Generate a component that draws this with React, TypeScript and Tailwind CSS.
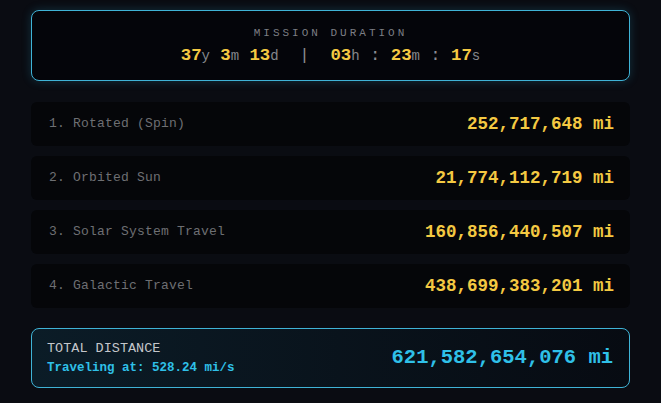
const mono = { fontFamily: '"Liberation Mono", "Courier New", monospace' };

const rows = [
  { label: '1. Rotated (Spin)', value: '252,717,648 mi' },
  { label: '2. Orbited Sun', value: '21,774,112,719 mi' },
  { label: '3. Solar System Travel', value: '160,856,440,507 mi' },
  { label: '4. Galactic Travel', value: '438,699,383,201 mi' },
];

function Num({ n, u }: { n: string; u: string }) {
  return (
    <span>
      <span className="font-bold text-[#f4c942]">{n}</span>
      <span className="text-[14px] text-[#85878c]">{u}</span>
    </span>
  );
}

export default function App() {
  return (
    <div className="min-h-[403px] w-[661px] bg-[#0a0c12] px-[31px] pt-[10px]" style={mono}>
      {/* Mission duration */}
      <div className="flex h-[71px] flex-col items-center justify-center rounded-[8px] border border-[#3fb3d6] bg-[#04050a] pt-[3px] shadow-[0_0_10px_rgba(40,160,200,0.25)]">
        <div className="text-[11px] tracking-[3px] text-[#7c7e84]">MISSION DURATION</div>
        <div className="mt-[2px] flex items-baseline whitespace-pre text-[17.3px] text-[#8a8c91]">
          <Num n="37" u="y" />
          <span> </span>
          <Num n="3" u="m" />
          <span> </span>
          <Num n="13" u="d" />
          <span>  |  </span>
          <Num n="03" u="h" />
          <span> : </span>
          <Num n="23" u="m" />
          <span> : </span>
          <Num n="17" u="s" />
        </div>
      </div>

      {/* Distance rows */}
      <div className="mt-[21px] flex flex-col gap-[10px]">
        {rows.map((r) => (
          <div
            key={r.label}
            className="flex h-[44px] items-center justify-between rounded-[6px] bg-[#050609] pl-[18px] pr-[16px]"
          >
            <span className="text-[13px] tracking-[0.2px] text-[#6e6f73]">{r.label}</span>
            <span className="text-[17.5px] font-bold text-[#f4c942]">{r.value}</span>
          </div>
        ))}
      </div>

      {/* Total */}
      <div className="mt-[20px] flex h-[60px] items-center justify-between rounded-[8px] border border-[#3fb3d6] bg-gradient-to-r from-[#0b1c27] to-[#070b12] pl-[15px] pr-[16px]">
        <div className="flex flex-col">
          <span className="text-[13.5px] leading-[18px] text-[#c4c6ca]">TOTAL DISTANCE</span>
          <span className="mt-[2px] text-[12.5px] font-bold leading-[17px] text-[#2fc0e8]">Traveling at: 528.24 mi/s</span>
        </div>
        <span className="text-[20.5px] font-bold text-[#2fc0e8]">621,582,654,076 mi</span>
      </div>
    </div>
  );
}
